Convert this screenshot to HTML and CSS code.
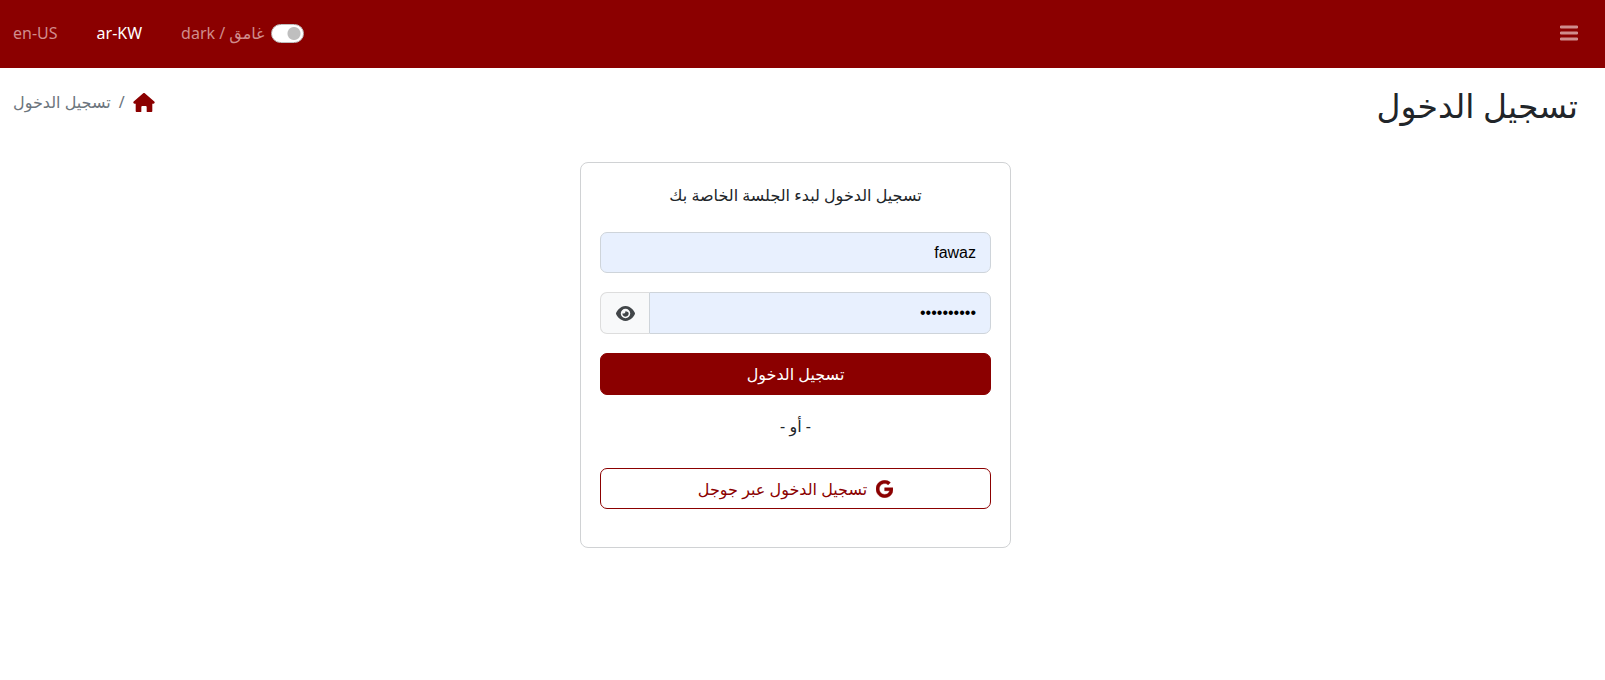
FILE: index.html
```html
<!DOCTYPE html>
<html lang="ar-KW" dir="rtl">
<head>
  <meta charset="utf-8">
  <meta name="viewport" content="width=device-width, initial-scale=1">
  <title>تسجيل الدخول</title>
  <link rel="stylesheet" href="styles.css">
</head>
<body>
  <nav class="navbar">
    <button class="menu-button" type="button" aria-label="القائمة">
      <svg class="menu-icon" viewBox="0 0 18 16" aria-hidden="true"><path d="M1 2h16M1 8h16M1 14h16" fill="none" stroke="currentColor" stroke-width="2.800" stroke-linecap="round"/></svg>
    </button>
    <div class="nav-tools" dir="ltr">
      <a class="nav-link" href="#en">en-US</a>
      <a class="nav-link active" href="#ar">ar-KW</a>
      <div class="theme">
        <label for="theme">dark / غامق</label>
        <input class="switch" id="theme" type="checkbox" role="switch">
      </div>
    </div>
  </nav>
  <header class="page-header">
    <h1 class="page-title">تسجيل الدخول</h1>
    <ol class="breadcrumb">
      <li><a class="home-link" href="#home" aria-label="الرئيسية"><svg class="home-icon" viewBox="0 0 576 512" aria-hidden="true"><path fill="currentColor" d="M575.8 255.5c0 18-15 32.1-32 32.1h-32V484c0 16-12 28-28 28H376c-10 0-16-6-16-16V376c0-14-10-24-24-24h-96c-14 0-24 10-24 24v120c0 10-6 16-16 16H92c-16 0-28-12-28-28V287.600H32c-18 0-32-14-32-32.100 0-9 3-17 10-24L266.400 8c7-7 15-8 22-8s15 2 21 7l255.400 224.500c8 7 12 15 11 24z"/></svg></a></li>
      <li class="crumb">تسجيل الدخول</li>
    </ol>
  </header>
  <main class="content">
    <form class="card">
      <p class="intro">تسجيل الدخول لبدء الجلسة الخاصة بك</p>
      <input class="field" type="text" value="fawaz" aria-label="اسم المستخدم" autocomplete="off">
      <div class="password-group">
        <input class="field" type="password" value="abcdefghij" aria-label="كلمة المرور" autocomplete="off">
        <button class="reveal" type="button" aria-label="إظهار كلمة المرور"><svg class="eye-icon" viewBox="0 0 576 512" aria-hidden="true"><path fill="currentColor" d="M288 32c-80.800 0-145.500 36.800-192.600 80.600C48.600 156 17.300 208 2.500 243.700c-3.300 7.900-3.300 16.700 0 24.600C17.300 304 48.600 356 95.400 399.400 142.500 443.200 207.200 480 288 480s145.500-36.800 192.600-80.600C527.400 356 558.700 304 573.500 268.300c3.300-7.900 3.300-16.700 0-24.600C558.700 208 527.400 156 480.600 112.600 433.500 68.800 368.800 32 288 32zM144 256a144 144 0 1 1 288 0 144 144 0 1 1-288 0zm144-64c0 35.300-28.700 64-64 64-7.100 0-13.900-1.200-20.300-3.300-5.500-1.800-11.900 1.600-11.700 7.400.3 6.900 1.300 13.800 3.200 20.700 13.700 51.200 66.400 81.600 117.600 67.900s81.600-66.400 67.900-117.600C369.600 221.600 332 190.500 292.100 188.700c-5.800-.3-9.200 6.100-7.400 11.700 2.100 6.400 3.300 13.200 3.300 20.300z"/></svg></button>
      </div>
      <button class="button primary" type="submit">تسجيل الدخول</button>
      <p class="or">- أو -</p>
      <button class="button outline" type="button">
        <svg class="google-icon" viewBox="0 0 488 512" aria-hidden="true"><path fill="currentColor" stroke="currentColor" stroke-width="12" d="M488 261.800C488 403.300 391.100 504 248 504 110.800 504 0 393.200 0 256S110.800 8 248 8c66.800 0 123 24.500 166.300 64.900l-67.500 64.900C258.500 52.600 94.300 116.600 94.300 256c0 86.500 69.100 156.600 153.700 156.600 98.200 0 135-70.400 140.800-106.900H248v-85.300h236.100c2.300 12.700 3.900 24.900 3.900 41.400z"/></svg>
        <span>تسجيل الدخول عبر جوجل</span>
      </button>
    </form>
  </main>
</body>
</html>
```
FILE: styles.css
```css
* {
  box-sizing: border-box;
}

body {
  margin: 0;
  background: #fff;
  color: #212529;
  font: 16px/24px "Noto Sans", "DejaVu Sans", sans-serif;
}

button,
input {
  margin: 0;
  font: inherit;
}

.navbar {
  display: flex;
  align-items: center;
  justify-content: space-between;
  min-height: 68px;
  padding: 0 27px 2px 13px;
  background: #8b0000;
  color: #d08c8c;
}

.menu-button {
  display: flex;
  padding: 0;
  border: 0;
  background: none;
  color: inherit;
}

.menu-icon {
  width: 18px;
  height: 16px;
}

.nav-tools {
  display: flex;
  align-items: center;
  gap: 39px;
}

.nav-link {
  color: inherit;
  text-decoration: none;
}

.nav-link.active {
  color: #fff;
}

.theme {
  display: flex;
  align-items: center;
  gap: 7px;
}

.switch {
  width: 33px;
  height: 19px;
  border: 1px solid #bfbfbf;
  border-radius: 10px;
  appearance: none;
  background: radial-gradient(circle at 22px 50%, #bfbfbf 6px, #fff 7px);
}

.switch:checked {
  background: radial-gradient(circle at 9px 50%, #8b0000 6px, #fff 7px);
}

.page-header {
  display: flex;
  align-items: flex-start;
  justify-content: space-between;
  padding: 15px 27px 17px 13px;
}

.page-title {
  margin: 0;
  font-size: 33px;
  font-weight: 400;
  line-height: 46px;
}

.breadcrumb {
  display: flex;
  align-items: center;
  margin: 7px 0 0;
  padding: 0;
  color: #6c757d;
  list-style: none;
}

.crumb::before {
  padding: 0 8px;
  content: "/";
}

.home-link {
  display: flex;
  color: #8b0000;
}

.home-icon {
  width: 22px;
  height: 19px;
}

.content {
  display: flex;
  justify-content: center;
  padding: 16px 27px 16px 13px;
}

.card {
  display: flex;
  flex-direction: column;
  gap: 19px;
  width: 100%;
  max-width: 431px;
  padding: 20px 19px 38px;
  border: 1px solid #d0d2d4;
  border-radius: 8px;
}

.intro,
.or {
  margin: 0;
  text-align: center;
}

.intro {
  padding: 0 0 6px;
}

.or {
  padding: 0 0 11px;
}

.field {
  flex: 1;
  width: 100%;
  min-width: 0;
  min-height: 41px;
  padding: 7px 14px;
  border: 1px solid #ced4da;
  border-radius: 7px;
  background: #e8f0fe;
  color: #000;
  font-family: "Liberation Sans", Arial, sans-serif;
}

.password-group {
  display: flex;
  min-height: 42px;
}

.password-group .field {
  border-radius: 0 7px 7px 0;
}

.reveal {
  display: flex;
  align-items: center;
  justify-content: center;
  width: 49px;
  padding: 0;
  border: 1px solid #ddd;
  border-right: 0;
  border-radius: 7px 0 0 7px;
  background: #f8f9fa;
  color: #424649;
}

.eye-icon {
  width: 19px;
  height: 17px;
}

.button {
  display: flex;
  align-items: center;
  justify-content: center;
  gap: 9px;
  min-height: 41px;
  padding: 7px 14px;
  border: 1px solid #8b0000;
  border-radius: 7px;
}

.primary {
  min-height: 42px;
  background: #8b0000;
  color: #fff;
}

.outline {
  background: #fff;
  color: #8b0000;
}

.google-icon {
  width: 17px;
  height: 18px;
}
```
